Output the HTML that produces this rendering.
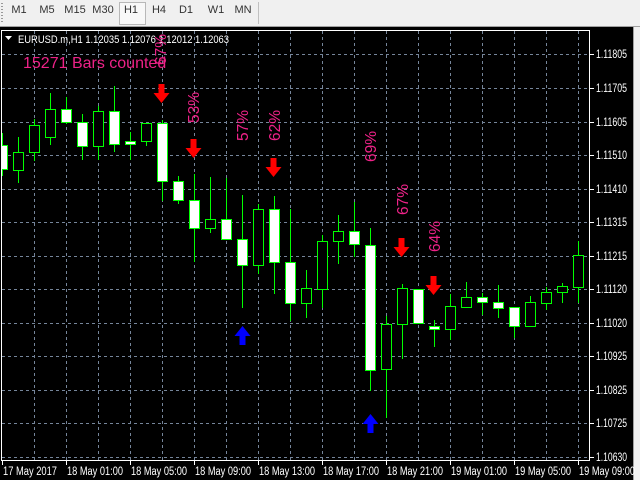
<!DOCTYPE html>
<html><head><meta charset="utf-8"><style>
html,body{margin:0;padding:0;width:640px;height:480px;overflow:hidden;background:#000}
#tb{position:absolute;left:0;top:0;width:640px;height:26px;background:#f0f0f0;border-bottom:1px solid #a0a0a0}
.b{position:absolute;top:4px;height:18px;line-height:18px;font:11px "Liberation Sans",sans-serif;color:#333;text-align:center;width:26px}
#sel{position:absolute;left:119px;top:2px;width:25px;height:21px;border:1px solid #b8b8b8;background:#f8f8f8}
#rs{position:absolute;left:633px;top:27px;width:7px;height:453px;background:#f0f0f0;border-left:1px solid #a0a0a0}
</style></head><body>
<div id="tb">
<div style="position:absolute;left:1px;top:3px;width:2px;height:20px;background:repeating-linear-gradient(#999 0 1px,transparent 1px 3px)"></div>
<div id="sel"></div>
<div class="b" style="left:6px">M1</div>
<div class="b" style="left:34px">M5</div>
<div class="b" style="left:62px">M15</div>
<div class="b" style="left:90px">M30</div>
<div class="b" style="left:118px">H1</div>
<div class="b" style="left:146px">H4</div>
<div class="b" style="left:173px">D1</div>
<div class="b" style="left:203px">W1</div>
<div class="b" style="left:230px">MN</div>
<div style="position:absolute;left:258px;top:2px;width:1px;height:22px;background:#c0c0c0"></div>
</div>
<div id="rs"></div>
<svg width="640" height="480" style="position:absolute;left:0;top:0" xmlns="http://www.w3.org/2000/svg" font-family="Liberation Sans, sans-serif">
<defs><clipPath id="c"><rect x="2" y="31" width="587" height="429"/></clipPath></defs>
<g id="grid" stroke="#75859a" stroke-dasharray="3,3" shape-rendering="crispEdges">
<path d="M2 54.5H589M2 88.5H589M2 122.5H589M2 155.5H589M2 189.5H589M2 222.5H589M2 256.5H589M2 289.5H589M2 323.5H589M2 356.5H589M2 390.5H589M2 423.5H589M2 457.5H589"/>
<path d="M34.5 31V460M66.5 31V460M98.5 31V460M130.5 31V460M162.5 31V460M194.5 31V460M226.5 31V460M258.5 31V460M290.5 31V460M322.5 31V460M354.5 31V460M386.5 31V460M418.5 31V460M450.5 31V460M482.5 31V460M514.5 31V460M546.5 31V460M578.5 31V460"/>
</g>
<g id="candles" clip-path="url(#c)" stroke="#00ff00" stroke-width="1" shape-rendering="crispEdges"></g>
<rect x="1.5" y="30.5" width="588" height="430" fill="none" stroke="#fff" shape-rendering="crispEdges"/>
<g stroke="#fff" shape-rendering="crispEdges">
<path d="M590 54.5h4M590 88.5h4M590 122.5h4M590 155.5h4M590 189.5h4M590 222.5h4M590 256.5h4M590 289.5h4M590 323.5h4M590 356.5h4M590 390.5h4M590 423.5h4M590 457.5h4"/>
<path d="M2.5 461v4M66.5 461v4M130.5 461v4M194.5 461v4M258.5 461v4M322.5 461v4M386.5 461v4M450.5 461v4M514.5 461v4M578.5 461v4"/>
</g>
<g fill="#fff" font-size="11.5" id="lbl"></g>
<g fill="#fff" font-size="11">
<text x="18" y="43" textLength="211" lengthAdjust="spacingAndGlyphs">EURUSD.m,H1  1.12035 1.12076 1.12012 1.12063</text>
<path d="M5 36h7l-3.5 4z"/>
</g>
<g fill="#ee2288" font-size="15.5">
<text x="23" y="68" font-size="16">15271 Bars counted</text>
<text transform="translate(166,65) rotate(-90)">67%</text>
<text transform="translate(199,123) rotate(-90)">53%</text>
<text transform="translate(248,141) rotate(-90)">57%</text>
<text transform="translate(280,141) rotate(-90)">62%</text>
<text transform="translate(376,162) rotate(-90)">69%</text>
<text transform="translate(408,215) rotate(-90)">67%</text>
<text transform="translate(440,252) rotate(-90)">64%</text>
</g>
<g id="arrows"></g>
</svg>
<script>
var P=[['1.11805',58],['1.11705',92],['1.11605',126],['1.11510',159],['1.11410',193],['1.11315',226],['1.11215',260],['1.11120',293],['1.11020',327],['1.10925',360],['1.10825',394],['1.10725',427],['1.10630',461]];
var D=['17 May 2017','18 May 01:00','18 May 05:00','18 May 09:00','18 May 13:00','18 May 17:00','18 May 21:00','19 May 01:00','19 May 05:00','19 May 09:00'];
var t='';P.forEach(function(p){t+='<text x="596" y="'+p[1]+'" textLength="31" lengthAdjust="spacingAndGlyphs">'+p[0]+'</text>';});
D.forEach(function(d,i){t+='<text x="'+(3+64*i)+'" y="475" textLength="'+(i==0?54:56)+'" lengthAdjust="spacingAndGlyphs">'+d+'</text>';});
document.getElementById('lbl').innerHTML=t;
var C=[[2,145,169,133,175,1],[18,152,170,137,182,0],[34,125,152,119,160,0],[50,109,137,93,144,0],[66,109,122,97,123,1],[82,122,146,114,159,1],[98,111,146,106,159,0],[114,111,144,86,151,1],[130,141,144,132,159,1],[146,123,141,123,145,0],[162,123,181,120,200,1],[178,181,200,176,203,1],[194,200,228,174,261,1],[210,219,228,177,232,0],[226,219,239,178,239,1],[242,239,265,195,307,1],[258,209,265,204,273,0],[274,209,262,196,293,1],[290,262,303,209,320,1],[306,288,303,270,317,0],[322,241,289,235,307,0],[338,231,241,215,263,0],[354,231,244,202,256,1],[370,245,370,228,390,1],[386,324,369,316,417,0],[402,288,324,284,358,0],[418,289,323,289,323,1],[434,326,329,320,346,1],[450,306,329,294,339,0],[466,297,307,282,307,0],[482,297,302,293,314,1],[498,302,308,285,317,1],[514,307,326,307,337,1],[530,302,326,296,326,0],[546,292,303,287,309,0],[562,286,292,283,302,0],[578,255,287,241,302,0]];
var s='';C.forEach(function(c){var x=c[0];s+='<path d="M'+(x+0.5)+' '+c[3]+'V'+(c[4]+1)+'"/>';s+='<rect x="'+(x-4.5)+'" y="'+(c[1]+0.5)+'" width="10" height="'+Math.max(1,c[2]-c[1])+'" fill="'+(c[5]?'#fff':'#000')+'"/>';});
document.getElementById('candles').innerHTML=s;
function dn(x,t,col){return '<polygon fill="'+col+'" points="'+(x-2.5)+','+t+' '+(x+3.5)+','+t+' '+(x+3.5)+','+(t+9)+' '+(x+8.5)+','+(t+9)+' '+(x+0.5)+','+(t+19)+' '+(x-7.5)+','+(t+9)+' '+(x-2.5)+','+(t+9)+'"/>';}
function up(x,b,col){return '<polygon fill="'+col+'" points="'+(x-2.5)+','+b+' '+(x+3.5)+','+b+' '+(x+3.5)+','+(b-9)+' '+(x+8.5)+','+(b-9)+' '+(x+0.5)+','+(b-19)+' '+(x-7.5)+','+(b-9)+' '+(x-2.5)+','+(b-9)+'"/>';}
document.getElementById('arrows').innerHTML=dn(161,84,'#f00')+dn(193,139,'#f00')+dn(273,158,'#f00')+dn(401,238,'#f00')+dn(433,276,'#f00')+up(242,345,'#00f')+up(370,433,'#00f');
</script>
</body></html>
